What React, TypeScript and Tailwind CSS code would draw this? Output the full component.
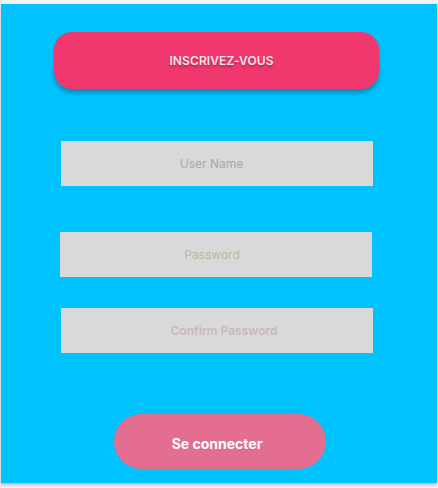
import React from 'react';

const font = { fontFamily: 'Inter, "Noto Sans", sans-serif' };

const App: React.FC = () => {
  return (
    <div className="w-[438px] h-[488px] bg-[#f4f4f4] pt-[4px] pl-[1px]" style={font}>
      <div className="w-[436px] h-[479px] bg-[#00C2FF] flex flex-col shadow-[0_2px_3px_rgba(0,0,0,0.25)]">
        <button className="ml-[53px] mt-[28px] w-[325px] h-[57px] rounded-[18px] bg-[#F0376E] shadow-[0_4px_4px_rgba(0,0,0,0.25)] text-[12px] font-semibold text-[#f6e4ea] [text-shadow:0_2px_2px_rgba(0,0,0,0.25)] tracking-[0.1px] pl-[10px]">
          INSCRIVEZ-VOUS
        </button>

        <input
          placeholder="User Name"
          className="ml-[60px] mt-[52px] w-[312px] h-[45px] bg-[#D9D9D9] text-center pr-[11px] text-[12px] outline-none placeholder:text-[#a3abab]"
        />
        <input
          type="password"
          placeholder="Password"
          className="ml-[59px] mt-[46px] w-[312px] h-[45px] bg-[#D9D9D9] text-center pr-[8px] text-[12px] outline-none placeholder:text-[#b9b7a2]"
        />
        <input
          type="password"
          placeholder="Confirm Password"
          className="ml-[60px] mt-[31px] w-[312px] h-[45px] bg-[#D9D9D9] text-center pl-[14px] text-[12px] font-semibold outline-none placeholder:text-[#c8b9b9]"
        />

        <button className="ml-[113px] mt-[61px] w-[212px] h-[55px] rounded-full bg-[#E46E8F] text-white text-[14px] font-bold pr-[6px] pt-[3px]">
          Se connecter
        </button>
      </div>
    </div>
  );
};

export default App;
